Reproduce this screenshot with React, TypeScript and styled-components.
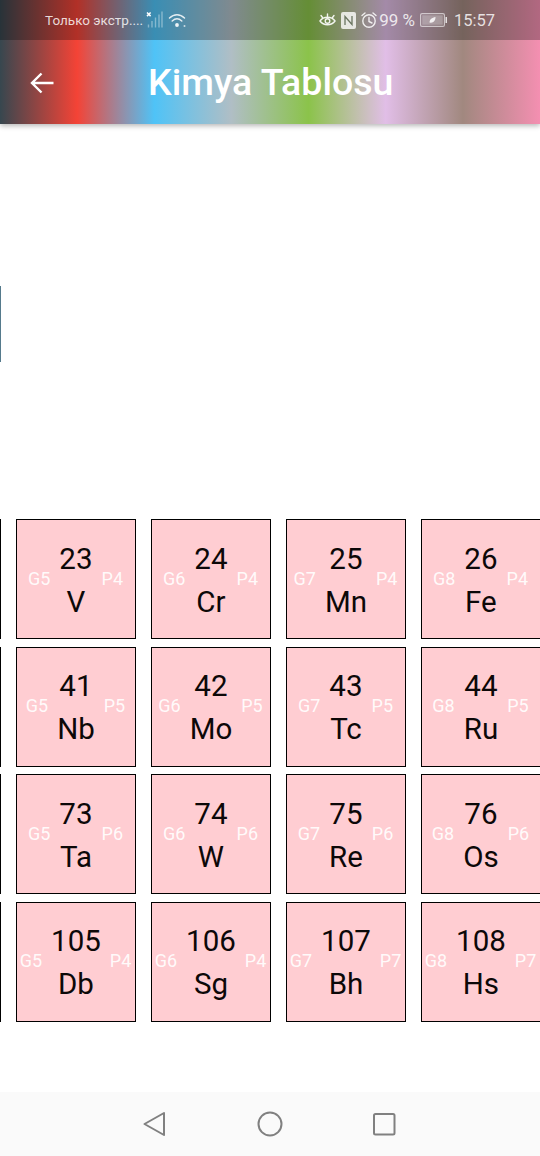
import React from "react";
import styled, { createGlobalStyle } from "styled-components";

const Global = createGlobalStyle`
  html, body { margin: 0; padding: 0; background: #fff; }
  body { font-family: Roboto, "Liberation Sans", sans-serif; overflow: hidden; }
`;

const Screen = styled.div`
  position: relative;
  width: 540px;
  height: 1156px;
  display: flex;
  flex-direction: column;
  overflow: hidden;
  background: #fff;
`;

const Header = styled.header`
  height: 124px;
  flex: none;
  display: flex;
  flex-direction: column;
  position: relative;
  z-index: 1;
  background: linear-gradient(
    90deg,
    #37474f 0%,
    #f44336 14.28%,
    #4fc3f7 28.57%,
    #b0bec5 42.85%,
    #8bc34a 57.14%,
    #e1bee7 71.42%,
    #a1887f 85.71%,
    #f48fb1 100%
  );
  box-shadow: 0 2px 5px rgba(0, 0, 0, 0.28);
`;

const StatusBar = styled.div`
  height: 40px;
  flex: none;
  background: rgba(0, 0, 0, 0.27);
  display: flex;
  align-items: center;
  justify-content: space-between;
  padding: 0 45px;
  color: rgba(255, 255, 255, 0.82);
`;

const StatusGroup = styled.div`
  display: flex;
  align-items: center;
`;

const Carrier = styled.span`
  font-size: 13.5px;
  margin-right: 3px;
`;

const Percent = styled.span`
  font-size: 17px;
  margin-left: 2px;
  white-space: nowrap;
`;

const Clock = styled.span`
  font-size: 16.5px;
  margin-left: 7px;
  white-space: nowrap;
`;

const AppBar = styled.div`
  flex: 1;
  display: flex;
  align-items: center;
  padding: 2px 0 0 30px;
`;

const Title = styled.h1`
  margin: 0 0 0 94px;
  font-size: 37.5px;
  font-weight: 500;
  line-height: 1;
  color: #fff;
  white-space: nowrap;
`;

const Canvas = styled.main`
  flex: 1;
  overflow: hidden;
  padding-top: 395px;
`;

const EdgeSliver = styled.div`
  position: absolute;
  left: 0;
  top: 286px;
  width: 1px;
  height: 76px;
  background: #557a8c;
`;

const Grid = styled.div`
  display: grid;
  grid-template-columns: repeat(5, 120px);
  grid-auto-rows: 120px;
  column-gap: 15px;
  row-gap: 7.5px;
  margin-left: -119px;
  width: 660px;
`;

const Cell = styled.div`
  box-sizing: border-box;
  border: 1.5px solid #000;
  background: #ffcdd2;
  padding: 3px 1px 0 0;
  display: flex;
  align-items: center;
  justify-content: center;
  gap: 9px;
`;

const Tag = styled.span`
  font-size: 18px;
  line-height: 20px;
  color: rgba(255, 255, 255, 0.92);
  white-space: nowrap;
  position: relative;
  top: -2px;
`;

const Center = styled.div`
  display: flex;
  flex-direction: column;
  align-items: center;
  gap: 8px;
  color: #0c0808;
  font-size: 29.5px;
  line-height: 35px;
`;

const Nav = styled.nav`
  height: 64px;
  flex: none;
  background: #fafafa;
  display: flex;
  align-items: center;
  justify-content: center;
  gap: 89px;
`;

const NavSlot = styled.svg`
  width: 26px;
  height: 28px;
  display: block;
`;

const StatusSvg = styled.svg<{ $ml?: number }>`
  display: block;
  flex: none;
  margin-left: ${(p) => p.$ml ?? 0}px;
`;

type El = { n: number; s: string; g: string; p: string };

const rows: El[][] = [
  [
    { n: 23, s: "V", g: "G5", p: "P4" },
    { n: 24, s: "Cr", g: "G6", p: "P4" },
    { n: 25, s: "Mn", g: "G7", p: "P4" },
    { n: 26, s: "Fe", g: "G8", p: "P4" },
  ],
  [
    { n: 41, s: "Nb", g: "G5", p: "P5" },
    { n: 42, s: "Mo", g: "G6", p: "P5" },
    { n: 43, s: "Tc", g: "G7", p: "P5" },
    { n: 44, s: "Ru", g: "G8", p: "P5" },
  ],
  [
    { n: 73, s: "Ta", g: "G5", p: "P6" },
    { n: 74, s: "W", g: "G6", p: "P6" },
    { n: 75, s: "Re", g: "G7", p: "P6" },
    { n: 76, s: "Os", g: "G8", p: "P6" },
  ],
  [
    { n: 105, s: "Db", g: "G5", p: "P4" },
    { n: 106, s: "Sg", g: "G6", p: "P4" },
    { n: 107, s: "Bh", g: "G7", p: "P7" },
    { n: 108, s: "Hs", g: "G8", p: "P7" },
  ],
];

const SignalIcon = () => (
  <StatusSvg width="17" height="22" viewBox="0 0 17 22" fill="none">
    <path d="M1 3.5l3.6 3.6M4.6 3.5L1 7.1" stroke="#fff" strokeWidth="1.5" />
    <g stroke="#fff" strokeOpacity="0.38" strokeWidth="1.4">
      <path d="M2.5 18.5v-3" />
      <path d="M6 18.5v-6.5" />
      <path d="M9.5 18.5v-10" />
      <path d="M13 18.5v-13" />
      <path d="M16 18.5v-16" />
    </g>
  </StatusSvg>
);

const WifiIcon = () => (
  <StatusSvg width="20" height="18" viewBox="0 0 20 18" fill="none" $ml={5}>
    <g stroke="#fff" strokeOpacity="0.85" strokeWidth="1.5" strokeLinecap="round">
      <path d="M1.5 7C6 2.5 12 2.5 16.5 7" />
      <path d="M4.2 10C7.2 7.2 10.8 7.2 13.8 10" />
    </g>
    <circle cx="9" cy="14" r="1.9" fill="#fff" fillOpacity="0.9" />
    <circle cx="16.5" cy="15" r="1" fill="#fff" fillOpacity="0.7" />
  </StatusSvg>
);

const EyeIcon = () => (
  <StatusSvg width="17" height="18" viewBox="0 0 17 18" fill="none">
    <g stroke="#fff" strokeOpacity="0.9" strokeWidth="1.4" strokeLinecap="round">
      <path d="M1 10c3.5-5 11.500-5 15 0-3.500 5-11.500 5-15 0z" />
      <circle cx="8.500" cy="10" r="2.300" />
      <path d="M2 4.500l1.500 2M8.500 3v2.300M15 4.500l-1.500 2" />
    </g>
  </StatusSvg>
);

const NfcIcon = () => (
  <StatusSvg width="15" height="17" viewBox="0 0 15 17" fill="none" $ml={5}>
    <rect x="0" y="0" width="15" height="17" rx="2" fill="#fff" fillOpacity="0.8" />
    <path d="M4 13V4.500L11 12.500V4" stroke="#6a7560" strokeWidth="1.300" />
  </StatusSvg>
);

const AlarmIcon = () => (
  <StatusSvg width="16" height="18" viewBox="0 0 16 18" fill="none" $ml={5}>
    <g stroke="#fff" strokeOpacity="0.85" strokeWidth="1.4" strokeLinecap="round">
      <circle cx="8" cy="10" r="6.200" />
      <path d="M8 6.500V10.500L11 12" />
      <path d="M1 4.500L4 2M15 4.500L12 2" />
    </g>
  </StatusSvg>
);

const BatteryIcon = () => (
  <StatusSvg width="27" height="14" viewBox="0 0 27 14" fill="none" $ml={5}>
    <rect x="0.600" y="0.600" width="23.800" height="12.800" rx="1.500" stroke="#fff" strokeOpacity="0.6" strokeWidth="1.200" />
    <rect x="2.200" y="2.200" width="20.600" height="9.600" fill="#fff" fillOpacity="0.3" />
    <rect x="25.500" y="4" width="1.500" height="6" fill="#fff" fillOpacity="0.8" />
    <path d="M9.500 9.500c0-3 2.500-5 6-5.500 0 3.500-2 6-5 5.700z" fill="#fff" fillOpacity="0.85" />
  </StatusSvg>
);

export default function App() {
  return (
    <Screen>
      <Global />
      <Header>
        <StatusBar>
          <StatusGroup>
            <Carrier>Только экстр....</Carrier>
            <SignalIcon />
            <WifiIcon />
          </StatusGroup>
          <StatusGroup>
            <EyeIcon />
            <NfcIcon />
            <AlarmIcon />
            <Percent>99 %</Percent>
            <BatteryIcon />
            <Clock>15:57</Clock>
          </StatusGroup>
        </StatusBar>
        <AppBar>
          <svg width="24" height="22" viewBox="0 0 24 22" fill="none" aria-label="back">
            <path d="M23.500 11H2M11.500 1.500L2 11l9.500 9.500" stroke="#fff" strokeWidth="2.400" />
          </svg>
          <Title>Kimya Tablosu</Title>
        </AppBar>
      </Header>
      <EdgeSliver />
      <Canvas>
        <Grid>
          {rows.map((row, i) => (
            <React.Fragment key={i}>
              <Cell />
              {row.map((e) => (
                <Cell key={e.n}>
                  <Tag>{e.g}</Tag>
                  <Center>
                    <span>{e.n}</span>
                    <span>{e.s}</span>
                  </Center>
                  <Tag>{e.p}</Tag>
                </Cell>
              ))}
            </React.Fragment>
          ))}
        </Grid>
      </Canvas>
      <Nav>
        <NavSlot viewBox="0 0 26 28" fill="none">
          <path d="M22 3L2.500 14 22 25z" stroke="#808080" strokeWidth="2" strokeLinejoin="round" />
        </NavSlot>
        <NavSlot viewBox="0 0 26 28" fill="none">
          <circle cx="13" cy="14" r="11.500" stroke="#808080" strokeWidth="2" />
        </NavSlot>
        <NavSlot viewBox="0 0 26 28" fill="none">
          <rect x="2" y="4" width="20.500" height="20.500" rx="1.500" stroke="#808080" strokeWidth="2" />
        </NavSlot>
      </Nav>
    </Screen>
  );
}
